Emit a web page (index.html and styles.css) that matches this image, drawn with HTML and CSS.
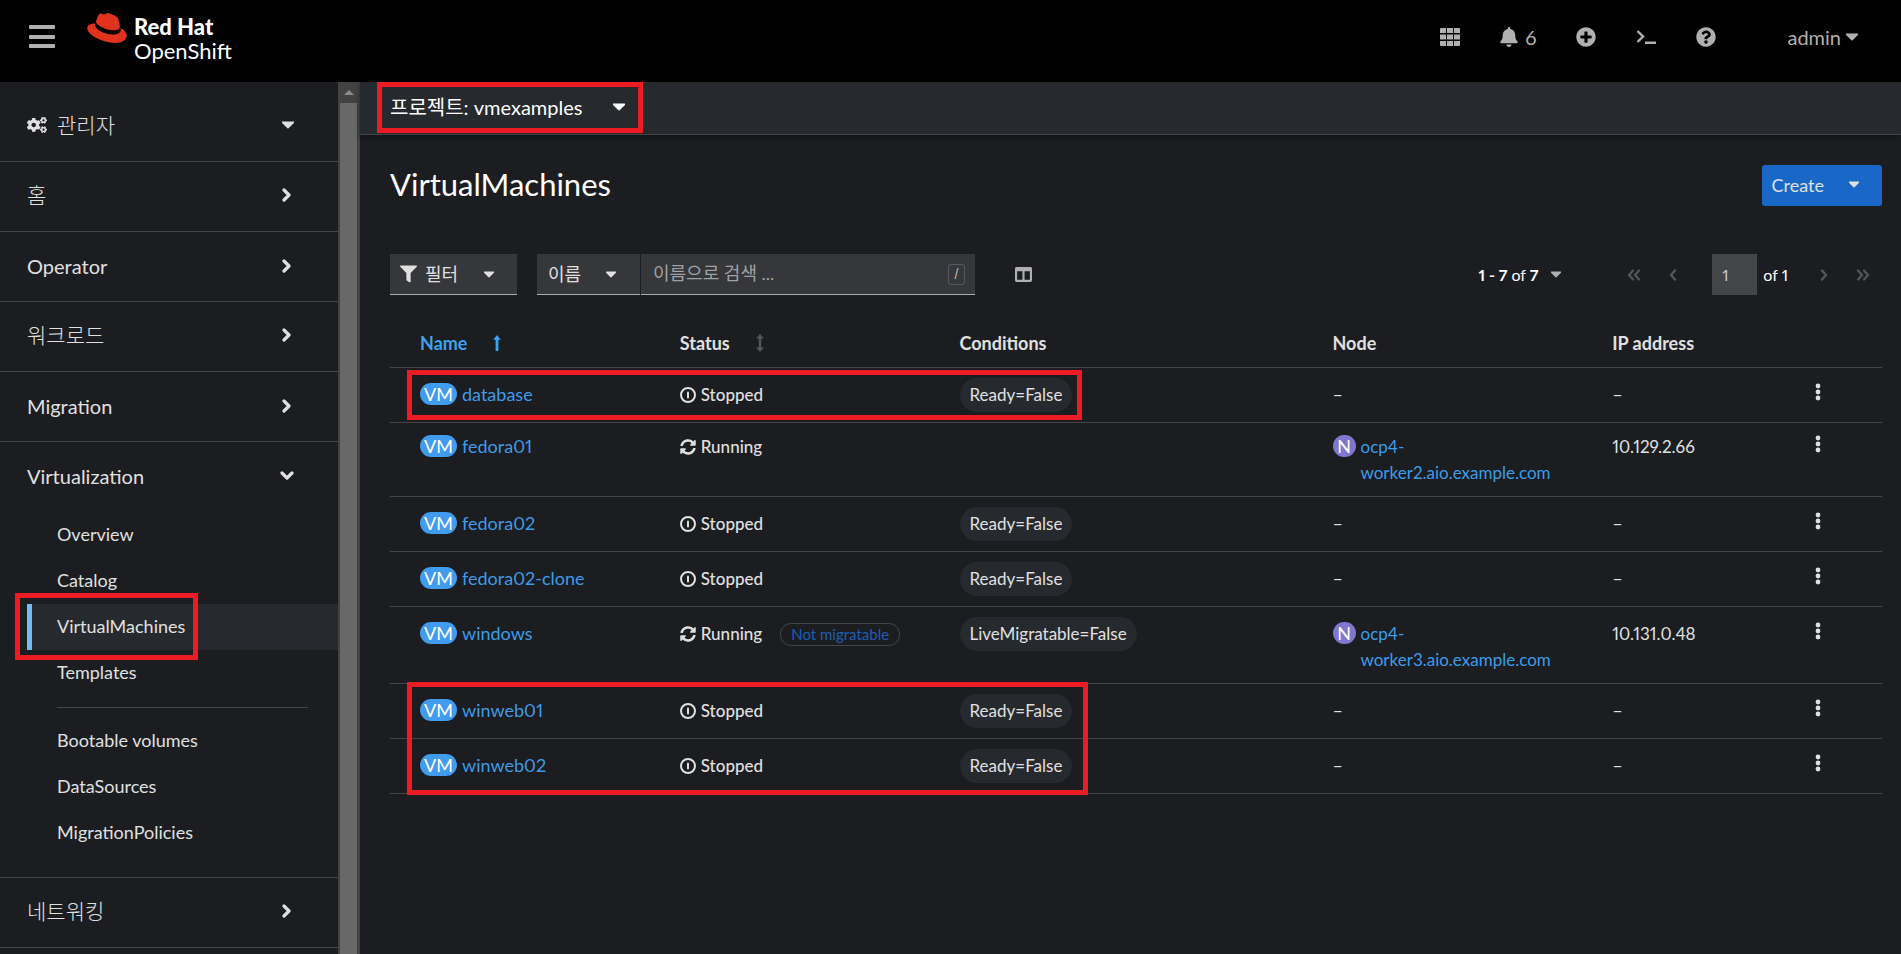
FILE: index.html
```html
<!DOCTYPE html>
<html lang="ko">
<head>
<meta charset="utf-8">
<title>VirtualMachines · Red Hat OpenShift</title>
<link rel="stylesheet" href="styles.css">
</head>
<body>
<svg class="sprite" aria-hidden="true">
  <symbol id="caret" viewBox="16 188 288 176"><path d="M31.3 192h257.3c17.8 0 26.7 21.5 14.1 34.1L174.1 354.8c-7.8 7.8-20.5 7.8-28.3 0L17.2 226.1C4.6 213.5 13.5 192 31.3 192z"/></symbol>
  <symbol id="angle" viewBox="0 0 10 16"><path d="M2 3l5 5-5 5" fill="none" stroke="currentColor" stroke-width="3.2" stroke-linecap="round" stroke-linejoin="round"/></symbol>
  <symbol id="thin-angle" viewBox="0 0 8 14"><path d="M6 2.500l-4 4.500 4 4.500" fill="none" stroke="currentColor" stroke-width="2.400" stroke-linecap="round"/></symbol>
  <symbol id="double-angle" viewBox="0 0 14 14"><path d="M6 2.500l-4 4.500 4 4.500M12 2.500l-4 4.500 4 4.500" fill="none" stroke="currentColor" stroke-width="2.200" stroke-linecap="round"/></symbol>
  <symbol id="kebab" viewBox="0 0 6 18"><circle cx="3" cy="3" r="2.400"/><circle cx="3" cy="9" r="2.400"/><circle cx="3" cy="15" r="2.400"/></symbol>
  <symbol id="stopped" viewBox="0 0 16 16"><circle cx="8" cy="8" r="7" fill="none" stroke="currentColor" stroke-width="2"/><rect x="7" y="4.500" width="2" height="7" rx="1"/></symbol>
  <symbol id="running" viewBox="0 0 512 512"><path d="M370.72 133.28C339.458 104.008 298.888 87.962 255.848 88c-77.458.068-144.328 53.178-162.791 126.85-1.344 5.363-6.122 9.15-11.651 9.15H24.103c-7.498 0-13.194-6.807-11.807-14.176C33.933 94.924 134.813 8 256 8c66.448 0 126.791 26.136 171.315 68.685L463.03 40.97C478.149 25.851 504 36.559 504 57.941V192c0 13.255-10.745 24-24 24H345.941c-21.382 0-32.09-25.851-16.971-40.971l41.75-41.749zM32 296h134.059c21.382 0 32.09 25.851 16.971 40.971l-41.75 41.75c31.262 29.273 71.835 45.319 114.876 45.28 77.418-.07 144.315-53.144 162.787-126.849 1.344-5.363 6.122-9.15 11.651-9.15h57.304c7.498 0 13.194 6.807 11.807 14.176C478.067 417.076 377.187 504 256 504c-66.448 0-126.791-26.136-171.315-68.685L48.97 471.03C33.851 486.149 8 475.441 8 454.059V320c0-13.255 10.745-24 24-24z"/></symbol>
  <symbol id="small-gear" viewBox="0 0 640 512" overflow="visible"><path d="M512.1 191l-8.2 14.3c-3 5.3-9.400 7.500-15.100 5.400-11.800-4.400-22.600-10.700-32.100-18.600-4.600-3.800-5.800-10.500-2.800-15.700l8.200-14.300c-6.900-8-12.300-17.300-15.900-27.400h-16.500c-6 0-11.200-4.300-12.200-10.300-2-12-2.100-24.600 0-37.100 1-6 6.200-10.400 12.200-10.400h16.500c3.600-10.100 9-19.400 15.900-27.400l-8.200-14.300c-3-5.200-1.900-11.900 2.800-15.700 9.500-7.900 20.400-14.200 32.100-18.600 5.700-2.100 12.100.1 15.100 5.400l8.200 14.300c10.500-1.900 21.200-1.900 31.700 0L552 6.300c3-5.300 9.400-7.500 15.100-5.400 11.800 4.400 22.600 10.700 32.100 18.600 4.600 3.800 5.800 10.500 2.800 15.700l-8.200 14.300c6.900 8 12.300 17.300 15.900 27.400h16.500c6 0 11.200 4.300 12.200 10.300 2 12 2.100 24.600 0 37.100-1 6-6.200 10.400-12.200 10.400h-16.500c-3.600 10.100-9 19.400-15.900 27.400l8.200 14.300c3 5.200 1.900 11.900-2.800 15.700-9.500 7.900-20.400 14.200-32.100 18.600-5.700 2.100-12.100-.1-15.100-5.400l-8.200-14.300c-10.400 1.900-21.200 1.900-31.700 0zm-10.500-58.800c38.500 29.600 82.400-14.300 52.800-52.800-38.500-29.700-82.400 14.300-52.800 52.800z"/></symbol>
</svg>

<header class="masthead">
  <button class="icon-btn menu-btn" aria-label="Menu"><svg width="26" height="24" viewBox="0 0 26 24"><rect width="26" height="4" y="0" rx="1"/><rect width="26" height="4" y="10" rx="1"/><rect width="26" height="4" y="19" rx="1"/></svg></button>
  <a class="brand" href="#">
    <svg class="hat" viewBox="0 2.900 24 18.200"><path d="M16.009 13.386c1.577 0 3.860-.326 3.860-2.202a1.765 1.765 0 0 0-.04-.431l-.94-4.080c-.216-.898-.406-1.305-1.982-2.093-1.223-.625-3.888-1.658-4.676-1.658-.733 0-.947.946-1.822.946-.842 0-1.467-.706-2.255-.706-.757 0-1.250.515-1.630 1.576 0 0-1.060 2.990-1.197 3.424a.81.81 0 0 0-.028.245c0 1.162 4.577 4.974 10.710 4.974m4.101-1.435c.218 1.032.218 1.140.218 1.277 0 1.765-1.984 2.745-4.593 2.745-5.895.004-11.060-3.451-11.060-5.734a2.326 2.326 0 0 1 .19-.925C2.746 9.415 0 9.794 0 12.217c0 3.969 9.405 8.861 16.851 8.861 5.710 0 7.149-2.582 7.149-4.620 0-1.605-1.387-3.425-3.887-4.512"/></svg>
    <span class="brand-text"><b>Red Hat</b><span>OpenShift</span></span>
  </a>
  <div class="tools">
    <button class="icon-btn" aria-label="Applications"><svg width="20" height="18" viewBox="0 0 20 18"><path d="M0 1q0-1 1-1h5v5H0zM7 0h6v5H7zM14 0h5q1 0 1 1v4h-6zM0 6.500h6v5H0zM7 6.500h6v5H7zM14 6.500h6v5h-6zM0 13h6v5H1q-1 0-1-1zM7 13h6v5H7zM14 13h6v4q0 1-1 1h-5z"/></svg></button>
    <button class="icon-btn bell-btn"><svg width="18" height="20" viewBox="0 0 448 512"><path d="M224 512c35.320 0 63.970-28.650 63.970-64H160.030c0 35.350 28.650 64 63.970 64zm215.390-149.710c-19.320-20.760-55.470-51.990-55.470-154.290 0-77.700-54.480-139.900-127.940-155.160V32c0-17.670-14.320-32-31.980-32s-31.980 14.330-31.980 32v20.840C118.560 68.100 64.080 130.300 64.080 208c0 102.300-36.150 133.530-55.470 154.290-6 6.450-8.660 14.160-8.610 21.710.11 16.400 12.980 32 32.100 32h383.800c19.120 0 32-15.600 32.100-32 .05-7.550-2.610-15.270-8.610-21.710z"/></svg><span>6</span></button>
    <button class="icon-btn" aria-label="Add"><svg width="20" height="20" viewBox="0 0 512 512"><path d="M256 8C119 8 8 119 8 256s111 248 248 248 248-111 248-248S393 8 256 8zm144 276c0 6.600-5.400 12-12 12h-92v92c0 6.600-5.400 12-12 12h-56c-6.600 0-12-5.400-12-12v-92h-92c-6.600 0-12-5.400-12-12v-56c0-6.600 5.400-12 12-12h92v-92c0-6.600 5.400-12 12-12h56c6.600 0 12 5.400 12 12v92h92c6.600 0 12 5.400 12 12v56z"/></svg></button>
    <button class="icon-btn" aria-label="Terminal"><svg width="20" height="16" viewBox="0 0 20 16"><path d="M1.500 2l5.500 5.500L1.500 13" fill="none" stroke="currentColor" stroke-width="2.400"/><rect x="9" y="12.500" width="11" height="2.500"/></svg></button>
    <button class="icon-btn" aria-label="Help"><svg width="20" height="20" viewBox="0 0 512 512"><path d="M504 256c0 136.997-111.043 248-248 248S8 392.997 8 256C8 119.083 119.043 8 256 8s248 111.083 248 248zM262.655 90c-54.497 0-89.255 22.957-116.549 63.758-3.536 5.286-2.353 12.415 2.715 16.258l34.699 26.310c5.205 3.947 12.621 3.008 16.665-2.122 17.864-22.658 30.113-35.797 57.303-35.797 20.429 0 45.698 13.148 45.698 32.958 0 14.976-12.363 22.667-32.534 33.976C247.128 238.528 216 254.941 216 296v4c0 6.627 5.373 12 12 12h56c6.627 0 12-5.373 12-12v-1.333c0-28.462 83.186-29.647 83.186-106.667 0-58.002-60.165-102-116.531-102zM256 338c-25.365 0-46 20.635-46 46 0 25.364 20.635 46 46 46s46-20.636 46-46c0-25.365-20.635-46-46-46z"/></svg></button>
  </div>
  <button class="icon-btn user-btn"><span>admin</span><svg class="caret"><use href="#caret"/></svg></button>
</header>

<div class="layout">
  <aside class="sidebar">
    <nav class="nav">
      <button class="perspective">
        <svg width="20" height="16" viewBox="0 0 640 512"><use href="#small-gear" width="640" height="512"/><use href="#small-gear" width="640" height="512" y="299"/><path d="M386.300 286.100l33.700 16.800c10.100 5.800 14.500 18.100 10.500 29.100-8.900 24.200-26.400 46.400-42.600 65.800-7.400 8.900-20.200 11.100-30.300 5.300l-29.100-16.800c-16 13.700-34.600 24.600-54.900 31.700v33.600c0 11.600-8.300 21.600-19.700 23.600-24.600 4.200-50.400 4.400-75.900 0-11.500-2-20-11.900-20-23.600V418c-20.300-7.200-38.900-18-54.900-31.700L74 403c-10 5.800-22.900 3.600-30.300-5.300-16.200-19.400-33.300-41.600-42.200-65.700-4-10.900.4-23.200 10.500-29.100l33.300-16.800c-3.900-20.900-3.900-42.400 0-63.400L12 205.800c-10.100-5.800-14.600-18.100-10.500-29 8.900-24.200 26-46.400 42.200-65.800 7.400-8.900 20.200-11.100 30.300-5.300l29.100 16.800c16-13.700 34.600-24.600 54.900-31.700V57.100c0-11.500 8.200-21.500 19.600-23.500 24.600-4.200 50.500-4.400 76-.1 11.500 2 20 11.900 20 23.600v33.600c20.300 7.200 38.900 18 54.900 31.700l29.100-16.800c10-5.800 22.900-3.600 30.300 5.300 16.200 19.400 33.200 41.600 42.100 65.800 4 10.900.1 23.200-10 29.100l-33.700 16.800c3.900 21 3.900 42.500 0 63.500zm-117.600 21.100c59.200-77-28.700-164.900-105.700-105.700-59.200 77 28.700 164.900 105.700 105.700z"/></svg>
        <span>관리자</span><svg class="caret"><use href="#caret"/></svg>
      </button>
      <button class="nav-item korean"><span>홈</span><svg class="angle"><use href="#angle"/></svg></button>
      <button class="nav-item"><span>Operator</span><svg class="angle"><use href="#angle"/></svg></button>
      <button class="nav-item korean"><span>워크로드</span><svg class="angle"><use href="#angle"/></svg></button>
      <button class="nav-item"><span>Migration</span><svg class="angle"><use href="#angle"/></svg></button>
      <section class="nav-group">
        <button class="nav-item" aria-expanded="true"><span>Virtualization</span><svg class="angle open"><use href="#angle"/></svg></button>
        <ul class="subnav">
          <li><a href="#">Overview</a></li>
          <li><a href="#">Catalog</a></li>
          <li class="current"><a href="#" aria-current="page">VirtualMachines</a><i class="mark mark-nav"></i></li>
          <li><a href="#">Templates</a></li>
          <li class="divider" role="separator"></li>
          <li><a href="#">Bootable volumes</a></li>
          <li><a href="#">DataSources</a></li>
          <li><a href="#">MigrationPolicies</a></li>
        </ul>
      </section>
      <button class="nav-item korean"><span>네트워킹</span><svg class="angle"><use href="#angle"/></svg></button>
    </nav>
    <div class="scrollbar"><span class="scroll-up"></span><span class="scroll-thumb"></span></div>
  </aside>

  <main class="main">
    <div class="project-bar">
      <button class="project">프로젝트: vmexamples<svg class="caret"><use href="#caret"/></svg><i class="mark mark-project"></i></button>
    </div>
    <div class="content">
      <div class="title-row">
        <h1>VirtualMachines</h1>
        <button class="create">Create<svg class="caret small"><use href="#caret"/></svg></button>
      </div>

      <div class="toolbar">
        <button class="control filter"><svg width="17" height="18" viewBox="0 0 512 512"><path d="M487.976 0H24.028C2.710 0-8.047 25.866 7.058 40.971L192 225.941V432c0 7.831 3.821 15.170 10.237 19.662l80 55.980C298.020 518.690 320 507.493 320 487.980V225.941l184.947-184.970C520.021 25.896 509.338 0 487.976 0z"/></svg><span>필터</span><svg class="caret small"><use href="#caret"/></svg></button>
        <div class="search">
          <button class="control by-name"><span>이름</span><svg class="caret small"><use href="#caret"/></svg></button>
          <label class="control field"><input type="text" placeholder="이름으로 검색 ..." aria-label="이름으로 검색"><kbd>/</kbd></label>
        </div>
        <button class="icon-btn columns" aria-label="Columns"><svg width="17" height="17" viewBox="0 0 512 512"><path d="M464 32H48C21.490 32 0 53.490 0 80v352c0 26.510 21.490 48 48 48h416c26.510 0 48-21.490 48-48V80c0-26.510-21.490-48-48-48zM224 416H64V160h160v256zm224 0H288V160h160v256z"/></svg></button>
        <div class="pager">
          <button class="range"><span><b>1 - 7</b> of <b>7</b></span><svg class="caret small"><use href="#caret"/></svg></button>
          <button class="page-btn" aria-label="First page" disabled><svg width="14" height="14"><use href="#double-angle"/></svg></button>
          <button class="page-btn" aria-label="Previous page" disabled><svg width="8" height="14"><use href="#thin-angle"/></svg></button>
          <label class="page"><input type="text" value="1" aria-label="Page"><span>of 1</span></label>
          <button class="page-btn flip" aria-label="Next page" disabled><svg width="8" height="14"><use href="#thin-angle"/></svg></button>
          <button class="page-btn flip" aria-label="Last page" disabled><svg width="14" height="14"><use href="#double-angle"/></svg></button>
        </div>
      </div>

      <div class="table-wrap">
        <table>
          <colgroup><col class="c-name"><col class="c-status"><col class="c-cond"><col class="c-node"><col class="c-ip"><col></colgroup>
          <thead><tr>
            <th class="sorted"><button>Name<svg width="8" height="16" viewBox="0 0 8 16"><path d="M4 0L7.800 4.800H5.400V16H2.600V4.800H.2z"/></svg></button></th>
            <th><button>Status<svg class="dim" width="8" height="18" viewBox="0 0 8 18"><path d="M4 0l4 4.500H5.200v9H8L4 18l-4-4.500h2.800v-9H0z"/></svg></button></th>
            <th>Conditions</th><th>Node</th><th>IP address</th><th></th>
          </tr></thead>
          <tbody>
            <tr><td><div class="res"><span class="badge">VM</span><a href="#">database</a></div></td><td><span class="status"><svg><use href="#stopped"/></svg>Stopped</span></td><td><span class="chip">Ready=False</span></td><td>–</td><td>–</td><td><button class="kebab" aria-label="Actions"><svg><use href="#kebab"/></svg></button></td></tr>
            <tr><td><div class="res"><span class="badge">VM</span><a href="#">fedora01</a></div></td><td><span class="status"><svg><use href="#running"/></svg>Running</span></td><td></td><td><div class="res"><span class="badge node">N</span><a class="compact" href="#">ocp4-worker2.aio.example.com</a></div></td><td><span class="compact">10.129.2.66</span></td><td><button class="kebab" aria-label="Actions"><svg><use href="#kebab"/></svg></button></td></tr>
            <tr><td><div class="res"><span class="badge">VM</span><a href="#">fedora02</a></div></td><td><span class="status"><svg><use href="#stopped"/></svg>Stopped</span></td><td><span class="chip">Ready=False</span></td><td>–</td><td>–</td><td><button class="kebab" aria-label="Actions"><svg><use href="#kebab"/></svg></button></td></tr>
            <tr><td><div class="res"><span class="badge">VM</span><a href="#">fedora02-clone</a></div></td><td><span class="status"><svg><use href="#stopped"/></svg>Stopped</span></td><td><span class="chip">Ready=False</span></td><td>–</td><td>–</td><td><button class="kebab" aria-label="Actions"><svg><use href="#kebab"/></svg></button></td></tr>
            <tr><td><div class="res"><span class="badge">VM</span><a href="#">windows</a></div></td><td><span class="status"><svg><use href="#running"/></svg>Running</span><span class="label">Not migratable</span></td><td><span class="chip">LiveMigratable=False</span></td><td><div class="res"><span class="badge node">N</span><a class="compact" href="#">ocp4-worker3.aio.example.com</a></div></td><td><span class="compact">10.131.0.48</span></td><td><button class="kebab" aria-label="Actions"><svg><use href="#kebab"/></svg></button></td></tr>
            <tr><td><div class="res"><span class="badge">VM</span><a href="#">winweb01</a></div></td><td><span class="status"><svg><use href="#stopped"/></svg>Stopped</span></td><td><span class="chip">Ready=False</span></td><td>–</td><td>–</td><td><button class="kebab" aria-label="Actions"><svg><use href="#kebab"/></svg></button></td></tr>
            <tr><td><div class="res"><span class="badge">VM</span><a href="#">winweb02</a></div></td><td><span class="status"><svg><use href="#stopped"/></svg>Stopped</span></td><td><span class="chip">Ready=False</span></td><td>–</td><td>–</td><td><button class="kebab" aria-label="Actions"><svg><use href="#kebab"/></svg></button></td></tr>
          </tbody>
        </table>
        <i class="mark mark-first"></i>
        <i class="mark mark-last"></i>
      </div>
    </div>
  </main>
</div>
</body>
</html>
```
FILE: styles.css
```css
* { box-sizing: border-box; }
body {
  margin: 0;
  height: 100vh;
  display: flex;
  flex-direction: column;
  overflow: hidden;
  background: #1b1d21;
  color: #e0e0e0;
  font: 18px/26px Lato, "Noto Sans CJK KR", sans-serif;
  font-variant-numeric: proportional-nums;
}
button, input { font: inherit; font-variant-numeric: inherit; color: inherit; background: none; border: 0; padding: 0; margin: 0; }
button { display: flex; align-items: center; }
a { color: #3e9ce6; text-decoration: none; }
svg { fill: currentColor; display: block; flex: none; }
.sprite { position: absolute; width: 0; height: 0; }
.caret { width: 12px; height: 8px; }
.caret.small { width: 10px; height: 7px; }
.mark { position: absolute; border: 5px solid #ed1c24; pointer-events: none; }

.masthead { flex: none; height: 82px; display: flex; align-items: center; padding: 0 43px 8px 29px; background: #000; }
.icon-btn { color: #b0b0b0; }
.brand { display: flex; gap: 7px; margin-left: 32px; color: #fff; }
.hat { width: 40px; height: 30px; margin-top: 1px; color: #e0321c; }
.brand-text { display: flex; flex-direction: column; font-size: 22px; line-height: 24px; padding-top: 3px; }
.brand-text b { font-weight: 900; }
.tools { display: flex; align-items: center; gap: 40px; margin-left: auto; }
.bell-btn { gap: 7px; font-size: 20px; }
.user-btn { gap: 5px; margin-left: 71px; font-size: 20px; }

.layout { flex: 1; display: flex; min-height: 0; }
.sidebar { flex: none; width: 360px; display: flex; overflow: hidden; }
.nav { flex: 1; font-size: 20px; }
.perspective { width: 100%; height: 80px; padding: 7px 44px 0 27px; gap: 10px; font-size: 21px; font-weight: 300; border-bottom: 1px solid #444548; }
.perspective .caret { margin-left: auto; }
.nav-item { width: 100%; height: 70px; padding: 0 46px 2px 27px; justify-content: space-between; border-bottom: 1px solid #444548; }
.korean { font-size: 21px; font-weight: 300; padding-bottom: 3px; }
.angle { width: 10px; height: 16px; }
.angle.open { transform: rotate(90deg); }
.nav-group { border-bottom: 1px solid #444548; }
.nav-group .nav-item { border: 0; }
.subnav { list-style: none; margin: 0; padding: 0 0 21px 27px; font-size: 18px; }
.subnav li { position: relative; }
.subnav a { display: block; padding: 9px 0 11px 25px; color: #e0e0e0; border-left: 5px solid transparent; }
.subnav .current a { background: #26292d; border-color: #73bcf7; }
.subnav .divider { height: 1px; margin: 11px 30px 10px; background: #444548; }
.mark-nav { left: -12px; top: -11px; width: 183px; height: 67px; }
.scrollbar { width: 22px; background: #424242; padding: 0 3px 0 2px; display: flex; flex-direction: column; }
.scroll-up { height: 21px; display: flex; align-items: center; justify-content: center; }
.scroll-up::before { content: ""; border: 5px solid transparent; border-top: 0; border-bottom-color: #8a8a8a; }
.scroll-thumb { flex: 1; background: #686868; }

.main { flex: 1; min-width: 0; }
.project-bar { height: 53px; padding-left: 17px; display: flex; background: #26292d; border-bottom: 1px solid #444548; box-shadow: 0 2px 5px rgba(0, 0, 0, .4); }
.project { position: relative; height: 51px; min-width: 266px; justify-content: space-between; padding: 0 18px 2px 13px; gap: 20px; color: #fff; font-size: 20px; }
.mark-project { inset: 0; }
.content { padding: 28px 19px 0 30px; }
.title-row { display: flex; justify-content: space-between; align-items: center; margin-bottom: 48px; }
h1 { margin: 0; padding-bottom: 2px; font-size: 31px; line-height: 38px; font-weight: 400; color: #fff; }
.create { height: 41px; margin-top: 2px; padding: 0 23px 2px 10px; gap: 25px; border-radius: 3px; background: #1967c7; }

.toolbar { display: flex; align-items: center; }
.control { height: 41px; background: #36373a; border-bottom: 1px solid #aaabac; }
.filter { width: 127px; padding: 0 23px 0 10px; gap: 8px; }
.filter .caret { margin-left: auto; }
.search { display: flex; gap: 1px; width: 438px; margin-left: 20px; }
.by-name { width: 103px; padding: 0 24px 0 11px; justify-content: space-between; }
.field { flex: 1; min-width: 0; display: flex; align-items: center; padding: 0 10px 0 12px; }
.field input { flex: 1; min-width: 0; outline: 0; padding-bottom: 2px; }
.field input::placeholder { color: #a0a1a3; opacity: 1; }
kbd { width: 17px; height: 21px; border: 1px solid #58595c; border-radius: 3px; font: 14px/18px "Liberation Sans", sans-serif; text-align: center; color: #b8b8b8; }
.columns { margin-left: 40px; }
.pager { display: flex; align-items: center; margin-left: auto; padding-right: 12px; font-size: 16px; }
.range { gap: 13px; margin-right: 66px; color: #fff; }
.range .caret { color: #b0b0b0; }
.page-btn { color: #55565a; }
.page-btn + .page-btn { margin-left: 28px; }
.flip svg { transform: scaleX(-1); }
.page { display: flex; align-items: center; gap: 6px; margin: 0 32px 0 35px; color: #fff; }
.page input { width: 45px; height: 41px; padding-left: 10px; background: #444548; color: #c8c8c8; }

.table-wrap { position: relative; }
table { width: 100%; table-layout: fixed; border-collapse: separate; border-spacing: 0; }
.c-name, .c-status, .c-node { width: 18.750%; }
.c-cond { width: 25%; }
.c-ip { width: 13%; }
th { height: 73px; padding: 35px 10px 0; text-align: left; vertical-align: top; font-weight: 700; border-bottom: 1px solid #444548; }
th:first-child, td:first-child { padding-left: 30px; }
th button { gap: 26px; }
.sorted { color: #3ea2f2; }
.dim { color: #55565a; }
td { padding: 10px; vertical-align: baseline; border-bottom: 1px solid #444548; }
.res { display: flex; align-items: baseline; gap: 5px; padding-right: 20px; }
.compact { font-size: 17px; }
.badge { flex: none; width: 37px; border-radius: 11px; background: #419bee; color: #fff; line-height: 22px; text-align: center; }
.badge.node { width: 23px; background: #8277cf; }
.status { font-size: 17px; font-weight: 500; }
.status svg { display: inline-block; width: 16px; height: 16px; margin-right: 5px; vertical-align: -2px; }
.label { display: inline-block; margin-left: 18px; padding: 0 10px; border: 1px solid #444548; border-radius: 11px; color: #1c5fb4; font-size: 15px; line-height: 21px; }
.chip { display: inline-block; padding: 4px 10px; border-radius: 17px; background: #26292d; font-size: 17px; }
.kebab { margin-left: 9px; }
.kebab svg { width: 6px; height: 18px; margin-bottom: -4px; }
.kebab { align-items: flex-end; }
.mark-first { left: 17px; top: 75px; width: 675px; height: 50px; }
.mark-last { left: 17px; bottom: -1px; width: 681px; height: 113px; }
```
